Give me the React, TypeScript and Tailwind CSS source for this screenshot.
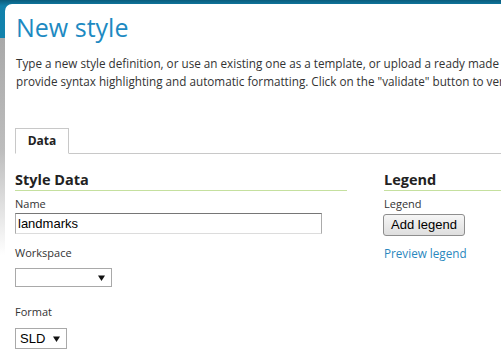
import React from 'react';

function SelectBox({ value, width, height }: { value?: string; width: string; height: string }) {
  return (
    <div
      className={`${width} ${height} flex items-center justify-between border border-[#a9a9a9] bg-white pl-[4px] pr-[6px] font-['Liberation_Sans',Arial,sans-serif] text-[13px] text-black`}
    >
      <span>{value ?? ''}</span>
      <svg width="7" height="6" viewBox="0 0 7 6" className="shrink-0">
        <path d="M0 0.5h7L3.5 6z" fill="#111" />
      </svg>
    </div>
  );
}

export default function App() {
  return (
    <div className="w-[501px] h-[360px] overflow-hidden bg-[linear-gradient(to_bottom,#0a5c7c_0px,#1180aa_6px,#1383ad_38px,#a9a9a9_38px,#bdbdbd_150px,#ffffff_255px)] font-['Open_Sans',sans-serif]">
      <div className="ml-[5px] mt-[4px] w-[760px] h-[400px] rounded-tl-[7px] bg-white pl-[10px] pt-[8px]">
        <h1 className="text-[25px] leading-[30px] text-[#1d8ac2] pl-[1px]">New style</h1>

        <p className="mt-[12px] pl-[1px] text-[11.7px] leading-[18px] text-[#333] whitespace-nowrap">
          Type a new style definition, or use an existing one as a template, or upload a ready made style from your local file system. The editor can
          <br />
          provide syntax highlighting and automatic formatting. Click on the "validate" button to verify the style is correct.
        </p>

        {/* tabs */}
        <div className="mt-[38px] flex border-b border-[#c8c8c8]">
          <div className="-mb-px h-[26px] w-[54px] border border-[#c8c8c8] border-b-white bg-white flex items-center justify-center text-[12px] font-bold text-[#222]">
            Data
          </div>
        </div>

        <div className="mt-[16px] grid grid-cols-[332px_1fr] gap-x-[37px]">
          {/* Style Data */}
          <div>
            <h2 className="h-[21px] border-b border-[#c5e09f] text-[14.5px] leading-[20px] font-bold text-[#222]">Style Data</h2>

            <div className="mt-[6px] text-[11px] leading-[14px] text-[#333]">Name</div>
            <div className="mt-[2px] h-[21px] w-[307px] border border-t-[#767676] border-x-[#ababab] border-b-[#dcdcdc] pl-[2px] flex items-center font-['Liberation_Sans',Arial,sans-serif] text-[13px] text-black">
              landmarks
            </div>

            <div className="mt-[12px] text-[11px] leading-[14px] text-[#333]">Workspace</div>
            <div className="mt-[8px]">
              <SelectBox width="w-[97px]" height="h-[19px]" />
            </div>

            <div className="mt-[18px] text-[11px] leading-[14px] text-[#333]">Format</div>
            <div className="mt-[9px]">
              <SelectBox value="SLD" width="w-[52px]" height="h-[21px]" />
            </div>
          </div>

          {/* Legend */}
          <div>
            <h2 className="h-[21px] border-b border-[#c5e09f] text-[14.5px] leading-[20px] font-bold text-[#222]">Legend</h2>

            <div className="mt-[6px] text-[11px] leading-[14px] text-[#333]">Legend</div>
            <button className="mt-[1px] -ml-px h-[22px] w-[82px] rounded-[3px] border border-[#8e8e8e] bg-[linear-gradient(to_bottom,#f6f6f6,#dedede)] font-['Liberation_Sans',Arial,sans-serif] text-[13px] text-black">
              Add legend
            </button>

            <div className="mt-[9px] text-[11.7px] leading-[16px]">
              <a href="#" className="text-[#2a87be]">
                Preview legend
              </a>
            </div>
          </div>
        </div>
      </div>
    </div>
  );
}
